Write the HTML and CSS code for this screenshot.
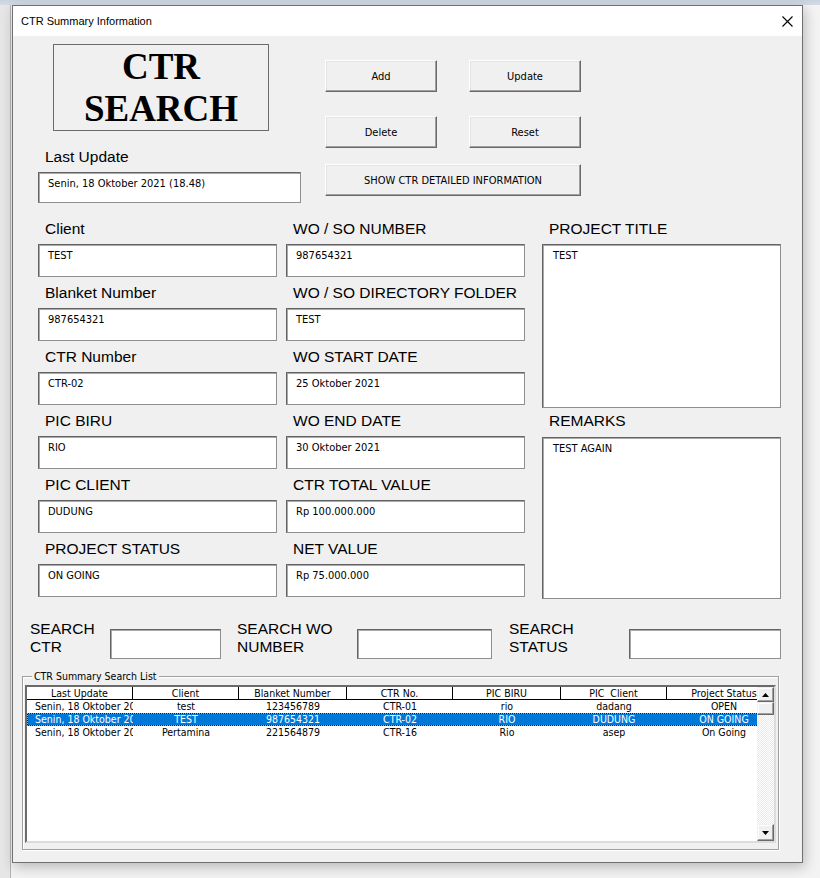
FILE: index.html
```html
<!DOCTYPE html>
<html lang="id">
<head>
    <meta charset="UTF-8">
    <meta name="viewport" content="width=device-width, initial-scale=1.0">
    <title>CTR Summary Information</title>
    <link rel="stylesheet" href="styles.css">
</head>
<body>
    <div class="window">
        <div class="titlebar">
            <span class="title">CTR Summary Information</span>
            <span class="close">
                <svg width="11" height="11" viewBox="0 0 11 11"><path d="M0.5 0.5L10.5 10.5M10.5 0.5L0.5 10.5" stroke="#000" stroke-width="1.1" fill="none"/></svg>
            </span>
        </div>

        <div class="form">
            <!-- header: logo, last update and action buttons -->
            <div class="head">
                <div class="head-left">
                    <div class="logo">CTR<br>SEARCH</div>
                    <div class="label">Last Update</div>
                    <div class="box box-update">Senin, 18 Oktober 2021 (18.48)</div>
                </div>
                <div class="actions">
                    <div class="btn-row">
                        <button class="btn">Add</button>
                        <button class="btn">Update</button>
                    </div>
                    <div class="btn-row btn-row-last">
                        <button class="btn">Delete</button>
                        <button class="btn">Reset</button>
                    </div>
                    <button class="btn btn-wide">SHOW CTR DETAILED INFORMATION</button>
                </div>
            </div>

            <!-- detail fields -->
            <div class="fields">
                <div class="col">
                    <div class="field"><div class="label">Client</div><div class="box">TEST</div></div>
                    <div class="field"><div class="label">Blanket Number</div><div class="box">987654321</div></div>
                    <div class="field"><div class="label">CTR Number</div><div class="box">CTR-02</div></div>
                    <div class="field"><div class="label">PIC BIRU</div><div class="box">RIO</div></div>
                    <div class="field"><div class="label">PIC CLIENT</div><div class="box">DUDUNG</div></div>
                    <div class="field"><div class="label">PROJECT STATUS</div><div class="box">ON GOING</div></div>
                </div>
                <div class="col col-mid">
                    <div class="field"><div class="label">WO / SO NUMBER</div><div class="box">987654321</div></div>
                    <div class="field"><div class="label">WO / SO DIRECTORY FOLDER</div><div class="box">TEST</div></div>
                    <div class="field"><div class="label">WO START DATE</div><div class="box">25 Oktober 2021</div></div>
                    <div class="field"><div class="label">WO END DATE</div><div class="box">30 Oktober 2021</div></div>
                    <div class="field"><div class="label">CTR TOTAL VALUE</div><div class="box">Rp 100.000.000</div></div>
                    <div class="field"><div class="label">NET VALUE</div><div class="box">Rp 75.000.000</div></div>
                </div>
                <div class="col col-right">
                    <div class="label">PROJECT TITLE</div>
                    <div class="box area area-title">TEST</div>
                    <div class="label label-remarks">REMARKS</div>
                    <div class="box area area-remarks">TEST AGAIN</div>
                </div>
            </div>

            <!-- search filters -->
            <div class="search">
                <div class="search-label">SEARCH<br>CTR</div>
                <div class="box search-box sb-ctr"></div>
                <div class="search-label sl-wo">SEARCH WO<br>NUMBER</div>
                <div class="box search-box sb-wo"></div>
                <div class="search-label sl-status">SEARCH<br>STATUS</div>
                <div class="box search-box sb-status"></div>
            </div>

            <!-- result list -->
            <div class="frame">
                <span class="legend">CTR Summary Search List</span>
                <div class="listbox">
                    <div class="list-main">
                        <div class="list-row list-head">
                            <span>Last Update</span>
                            <span>Client</span>
                            <span>Blanket Number</span>
                            <span>CTR No.</span>
                            <span>PIC BIRU</span>
                            <span>PIC&nbsp; Client</span>
                            <span>Project Status</span>
                        </div>
                        <div class="list-row">
                            <span class="c-first">Senin, 18 Oktober 2021 (18.48)</span>
                            <span>test</span>
                            <span>123456789</span>
                            <span>CTR-01</span>
                            <span>rio</span>
                            <span>dadang</span>
                            <span>OPEN</span>
                        </div>
                        <div class="list-row selected">
                            <span class="c-first">Senin, 18 Oktober 2021 (18.48)</span>
                            <span>TEST</span>
                            <span>987654321</span>
                            <span>CTR-02</span>
                            <span>RIO</span>
                            <span>DUDUNG</span>
                            <span>ON GOING</span>
                        </div>
                        <div class="list-row">
                            <span class="c-first">Senin, 18 Oktober 2021 (18.48)</span>
                            <span>Pertamina</span>
                            <span>221564879</span>
                            <span>CTR-16</span>
                            <span>Rio</span>
                            <span>asep</span>
                            <span>On Going</span>
                        </div>
                    </div>
                    <div class="scrollbar">
                        <div class="sb-btn sb-up"><svg width="7" height="4" viewBox="0 0 7 4"><path d="M0 4H7L3.5 0Z" fill="#000"/></svg></div>
                        <div class="sb-btn sb-thumb"></div>
                        <div class="sb-track"></div>
                        <div class="sb-btn sb-down"><svg width="7" height="4" viewBox="0 0 7 4"><path d="M0 0H7L3.5 4Z" fill="#000"/></svg></div>
                    </div>
                </div>
            </div>
        </div>
    </div>
</body>
</html>
```

FILE: styles.css
```css
body {
    margin: 0;
    height: 878px;
    overflow: hidden;
    font-family: "Liberation Sans", Arial, sans-serif;
    background:
        linear-gradient(#c8d3df, #d3dce6) 0 0 / 100% 5px no-repeat,
        linear-gradient(90deg, #e6e6e6 0 10px, #b4b4b4 10px 11px, transparent 11px) 0 0 / 12px 100% no-repeat,
        #f3f3f3;
}

.window {
    box-sizing: border-box;
    width: 791px;
    height: 858px;
    margin: 5px 0 0 12px;
    border: 1px solid #707070;
    background: #f0f0f0;
    box-shadow: 2px 4px 12px rgba(0, 0, 0, 0.24);
}

.titlebar {
    height: 30px;
    background: #fff;
    display: flex;
    align-items: center;
    justify-content: space-between;
    padding: 0 9px 0 8px;
}
.title {
    font-size: 11px;
    color: #000;
}
.close {
    display: flex;
}

.form {
    padding-left: 25px;
}

.head {
    display: flex;
}
.head-left {
    width: 263px;
}
.logo {
    box-sizing: border-box;
    width: 216px;
    height: 87px;
    margin: 8px 0 0 15px;
    padding-top: 1px;
    border: 1px solid #6b6b6b;
    font: bold 37px/42px "Liberation Serif", "Times New Roman", serif;
    text-align: center;
    color: #000;
}

.label {
    font-size: 15.5px;
    line-height: 18px;
    padding-left: 7px;
    white-space: nowrap;
    color: #000;
}
.head-left .label {
    margin-top: 17px;
}

.box {
    box-sizing: border-box;
    height: 33px;
    margin-top: 6px;
    padding: 4px 9px;
    background: #fff;
    border: 1px solid;
    border-color: #646464 #8e8e8e #8e8e8e #646464;
    box-shadow: inset 1px 1px 0 #a8a8a8;
    font-family: "DejaVu Sans Condensed", "DejaVu Sans", Tahoma, sans-serif;
    font-stretch: condensed;
    font-size: 11px;
    line-height: 13px;
    white-space: nowrap;
    overflow: hidden;
    color: #000;
}
.box-update {
    height: 31px;
}

.actions {
    margin-left: 24px;
    padding-top: 24px;
}
.btn-row {
    display: flex;
    gap: 32px;
    margin-bottom: 24px;
}
.btn-row-last {
    margin-bottom: 16px;
}
.btn {
    box-sizing: border-box;
    width: 112px;
    height: 32px;
    padding: 0;
    background: #f0f0f0;
    border: 1px solid;
    border-color: #fff #696969 #696969 #fff;
    box-shadow: inset -1px -1px 0 #a0a0a0, inset 1px 1px 0 #e3e3e3;
    font-family: "DejaVu Sans Condensed", "DejaVu Sans", Tahoma, sans-serif;
    font-stretch: condensed;
    font-size: 11px;
    color: #000;
}
.btn-wide {
    display: block;
    width: 256px;
}

.fields {
    display: flex;
    margin-top: 17px;
}
.col {
    width: 239px;
}
.col-mid {
    margin-left: 9px;
}
.col-right {
    margin-left: 17px;
}
.field {
    margin-bottom: 7px;
}
.area {
    padding-left: 10px;
}
.area-title {
    height: 164px;
}
.label-remarks {
    margin-top: 4px;
}
.area-remarks {
    height: 162px;
    margin-top: 7px;
}

.search {
    display: flex;
    align-items: flex-start;
    margin: 16px 0 0 -8px;
}
.search-label {
    width: 80px;
    font-size: 15.5px;
    line-height: 18px;
    color: #000;
}
.sl-wo {
    width: 120px;
    margin-left: 16px;
}
.sl-status {
    width: 120px;
    margin-left: 17px;
}
.search-box {
    height: 30px;
    margin-top: 9px;
}
.sb-ctr {
    width: 111px;
}
.sb-wo {
    width: 135px;
}
.sb-status {
    width: 152px;
}

.frame {
    position: relative;
    box-sizing: border-box;
    width: 757px;
    height: 174px;
    margin: 17px 0 0 -16px;
    padding: 8px 0 0 2px;
    border: 1px solid #a0a0a0;
    box-shadow: inset 1px 1px 0 #fff, 1px 1px 0 #fff;
}
.legend {
    position: absolute;
    top: -7px;
    left: 9px;
    padding: 0 2px;
    background: #f0f0f0;
    font-family: "DejaVu Sans Condensed", "DejaVu Sans", Tahoma, sans-serif;
    font-stretch: condensed;
    font-size: 10.5px;
    line-height: 13px;
    color: #000;
}

.listbox {
    box-sizing: border-box;
    display: flex;
    width: 751px;
    height: 158px;
    background: #fff;
    border: 2px solid;
    border-color: #6a6a6a #dcdcdc #dcdcdc #6a6a6a;
}
.list-main {
    width: 730px;
    overflow: hidden;
}
.list-row {
    display: grid;
    grid-template-columns: 106px 106px 108px 106px 108px 106px 114px;
    height: 13px;
    font-family: "DejaVu Sans Condensed", "DejaVu Sans", Tahoma, sans-serif;
    font-stretch: condensed;
    font-size: 10.5px;
    line-height: 13px;
    white-space: nowrap;
    color: #000;
}
.list-row span {
    overflow: hidden;
    text-align: center;
}
.list-row .c-first {
    text-align: left;
    padding-left: 8px;
}
.list-head {
    height: 12px;
    line-height: 12px;
    border-bottom: 1px solid #000;
}
.list-head span {
    border-right: 1px solid #000;
}
.list-head span:last-child {
    border-right: 0;
}
.selected {
    color: #fff;
    background:
        repeating-linear-gradient(90deg, #f29a3a 0 1px, #1c1c1c 1px 2px) 0 0 / 100% 1px no-repeat,
        repeating-linear-gradient(90deg, #f29a3a 0 1px, #1c1c1c 1px 2px) 0 100% / 100% 1px no-repeat,
        repeating-linear-gradient(180deg, #f29a3a 0 1px, #1c1c1c 1px 2px) 0 0 / 1px 100% no-repeat,
        #0078d7;
}

.scrollbar {
    width: 17px;
    display: flex;
    flex-direction: column;
}
.sb-btn {
    box-sizing: border-box;
    display: flex;
    align-items: center;
    justify-content: center;
    height: 15px;
    background: #f0f0f0;
    border: 1px solid;
    border-color: #f0f0f0 #696969 #696969 #f0f0f0;
    box-shadow: inset -1px -1px 0 #a0a0a0, inset 1px 1px 0 #fff;
}
.sb-thumb {
    height: 13px;
}
.sb-track {
    flex: 1;
    background: repeating-conic-gradient(#e9e9e9 0 25%, #fff 0 50%) 0 0 / 2px 2px;
}
.sb-down {
    height: 17px;
}
```
